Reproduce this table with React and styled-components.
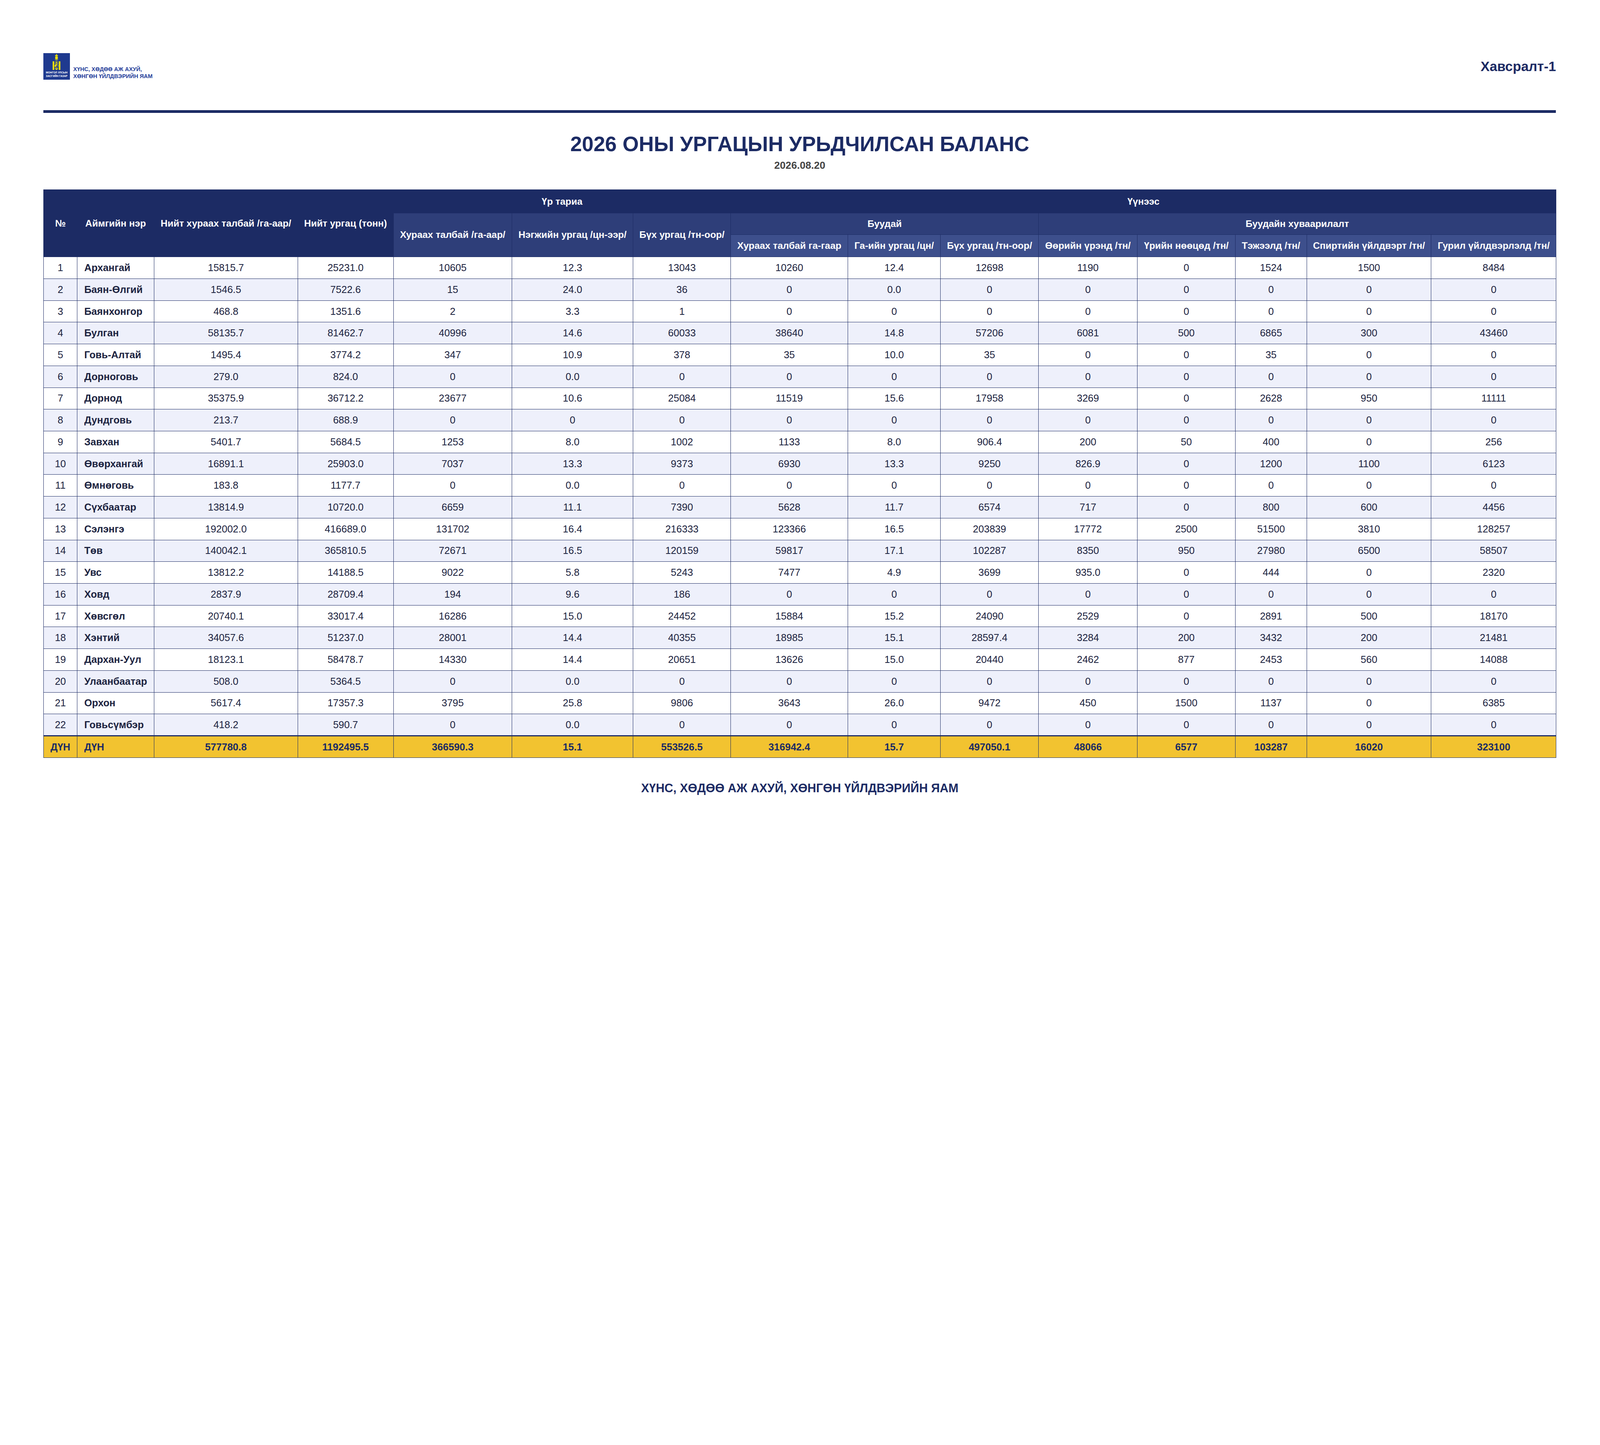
import React from 'react';
import styled, { createGlobalStyle } from 'styled-components';

// every size is measured in pixels of the 7056px-wide reference and scaled to the viewport
const px = n => `calc(${n} * var(--u))`;

const GlobalStyle = createGlobalStyle`
    :root {
        --u: calc(100vw / 7056);
    }
    html, body {
        margin: 0;
        overflow: hidden;
        background: #ffffff;
        font-family: "Liberation Sans", Arial, sans-serif;
    }
`;

const NAVY = '#1c2b64';

const Page = styled.div`
    width: 100vw;
    box-sizing: border-box;
    padding: ${px(235)} ${px(194)} ${px(150)} ${px(192)};
    background: #ffffff;
`;

const TopBar = styled.header`
    display: flex;
    justify-content: space-between;
    align-items: center;
`;

const Brand = styled.div`
    display: flex;
    align-items: flex-end;
    gap: ${px(15)};
`;

const Mark = styled.div`
    width: ${px(116)};
    height: ${px(117)};
    background: #1f3a8f;
    display: flex;
    flex-direction: column;
    align-items: center;
`;

const EmblemSvg = styled.svg`
    display: block;
    width: ${px(116)};
    height: ${px(79)};
`;

const MarkText = styled.div`
    color: #ffffff;
    font-size: ${px(11.5)};
    font-weight: 700;
    line-height: ${px(14.5)};
    text-align: center;
    white-space: nowrap;
`;

const BrandName = styled.div`
    color: #26409a;
    font-size: ${px(25)};
    font-weight: 700;
    line-height: ${px(30.5)};
    white-space: nowrap;
`;

const Annex = styled.div`
    color: ${NAVY};
    font-size: ${px(60)};
    font-weight: 700;
`;

const Rule = styled.div`
    height: ${px(12)};
    margin-top: ${px(134)};
    background: ${NAVY};
`;

const Title = styled.h1`
    margin: ${px(82)} 0 0;
    color: ${NAVY};
    font-size: ${px(92)};
    line-height: 1.2;
    font-weight: 700;
    text-align: center;
`;

const DateLine = styled.div`
    margin-top: ${px(13)};
    color: #444444;
    font-size: ${px(45)};
    line-height: 1.2;
    font-weight: 700;
    text-align: center;
`;

const Table = styled.table`
    margin-top: ${px(79)};
    width: 100%;
    table-layout: fixed;
    border-collapse: collapse;
`;

const Col = styled.col`
    width: ${p => px(p.$w)};
`;

const HeadRow = styled.tr`
    height: ${p => px(p.$h)};
`;

const tones = {
    dark: '#1c2b64',
    mid: '#2e3e79',
    light: '#3d4f8c',
};

const Th = styled.th`
    background: ${p => tones[p.$tone]};
    color: #ffffff;
    font-size: ${px(42)};
    font-weight: 700;
    padding: 0 ${px(4)};
    text-align: center;
    vertical-align: middle;
    white-space: nowrap;
    border: ${px(3)} solid ${NAVY};
`;

const Row = styled.tr`
    height: ${px(96)};
    background: ${p => (p.$alt ? '#eef0fb' : '#ffffff')};
`;

const TotalRow = styled.tr`
    height: ${px(97)};
    background: #f2c330;
`;

const Td = styled.td`
    border: ${px(3)} solid ${NAVY};
    padding: 0 ${px(10)};
    padding-left: ${p => (p.$left ? px(31) : px(10))};
    color: #1c2340;
    font-size: ${px(44)};
    font-weight: ${p => (p.$bold ? 700 : 400)};
    text-align: ${p => (p.$left ? 'left' : 'center')};
    vertical-align: middle;
    white-space: nowrap;
`;

const TotalTd = styled(Td)`
    border-top: ${px(6)} solid ${NAVY};
    color: ${NAVY};
    font-weight: 700;
`;

const Footer = styled.div`
    margin-top: ${px(102)};
    color: ${NAVY};
    font-size: ${px(53)};
    line-height: 1.2;
    font-weight: 700;
    text-align: center;
`;

const colWidths = [147, 340, 633, 422, 523, 534, 431, 516, 409, 432, 436, 432, 315, 549, 551];

const rows = [
    ['1', 'Архангай', '15815.7', '25231.0', '10605', '12.3', '13043', '10260', '12.4', '12698', '1190', '0', '1524', '1500', '8484'],
    ['2', 'Баян-Өлгий', '1546.5', '7522.6', '15', '24.0', '36', '0', '0.0', '0', '0', '0', '0', '0', '0'],
    ['3', 'Баянхонгор', '468.8', '1351.6', '2', '3.3', '1', '0', '0', '0', '0', '0', '0', '0', '0'],
    ['4', 'Булган', '58135.7', '81462.7', '40996', '14.6', '60033', '38640', '14.8', '57206', '6081', '500', '6865', '300', '43460'],
    ['5', 'Говь-Алтай', '1495.4', '3774.2', '347', '10.9', '378', '35', '10.0', '35', '0', '0', '35', '0', '0'],
    ['6', 'Дорноговь', '279.0', '824.0', '0', '0.0', '0', '0', '0', '0', '0', '0', '0', '0', '0'],
    ['7', 'Дорнод', '35375.9', '36712.2', '23677', '10.6', '25084', '11519', '15.6', '17958', '3269', '0', '2628', '950', '11111'],
    ['8', 'Дундговь', '213.7', '688.9', '0', '0', '0', '0', '0', '0', '0', '0', '0', '0', '0'],
    ['9', 'Завхан', '5401.7', '5684.5', '1253', '8.0', '1002', '1133', '8.0', '906.4', '200', '50', '400', '0', '256'],
    ['10', 'Өвөрхангай', '16891.1', '25903.0', '7037', '13.3', '9373', '6930', '13.3', '9250', '826.9', '0', '1200', '1100', '6123'],
    ['11', 'Өмнөговь', '183.8', '1177.7', '0', '0.0', '0', '0', '0', '0', '0', '0', '0', '0', '0'],
    ['12', 'Сүхбаатар', '13814.9', '10720.0', '6659', '11.1', '7390', '5628', '11.7', '6574', '717', '0', '800', '600', '4456'],
    ['13', 'Сэлэнгэ', '192002.0', '416689.0', '131702', '16.4', '216333', '123366', '16.5', '203839', '17772', '2500', '51500', '3810', '128257'],
    ['14', 'Төв', '140042.1', '365810.5', '72671', '16.5', '120159', '59817', '17.1', '102287', '8350', '950', '27980', '6500', '58507'],
    ['15', 'Увс', '13812.2', '14188.5', '9022', '5.8', '5243', '7477', '4.9', '3699', '935.0', '0', '444', '0', '2320'],
    ['16', 'Ховд', '2837.9', '28709.4', '194', '9.6', '186', '0', '0', '0', '0', '0', '0', '0', '0'],
    ['17', 'Хөвсгөл', '20740.1', '33017.4', '16286', '15.0', '24452', '15884', '15.2', '24090', '2529', '0', '2891', '500', '18170'],
    ['18', 'Хэнтий', '34057.6', '51237.0', '28001', '14.4', '40355', '18985', '15.1', '28597.4', '3284', '200', '3432', '200', '21481'],
    ['19', 'Дархан-Уул', '18123.1', '58478.7', '14330', '14.4', '20651', '13626', '15.0', '20440', '2462', '877', '2453', '560', '14088'],
    ['20', 'Улаанбаатар', '508.0', '5364.5', '0', '0.0', '0', '0', '0', '0', '0', '0', '0', '0', '0'],
    ['21', 'Орхон', '5617.4', '17357.3', '3795', '25.8', '9806', '3643', '26.0', '9472', '450', '1500', '1137', '0', '6385'],
    ['22', 'Говьсүмбэр', '418.2', '590.7', '0', '0.0', '0', '0', '0', '0', '0', '0', '0', '0', '0'],
];

const total = ['ДҮН', 'ДҮН', '577780.8', '1192495.5', '366590.3', '15.1', '553526.5', '316942.4', '15.7', '497050.1', '48066', '6577', '103287', '16020', '323100'];

const leafHeads = [
    'Хураах талбай га-гаар',
    'Га-ийн ургац /цн/',
    'Бүх ургац /тн-оор/',
    'Өөрийн үрэнд /тн/',
    'Үрийн нөөцөд /тн/',
    'Тэжээлд /тн/',
    'Спиртийн үйлдвэрт /тн/',
    'Гурил үйлдвэрлэлд /тн/',
];

// soyombo, drawn small inside the blue mark
const Emblem = () => (
    <EmblemSvg viewBox="0 0 116 79">
        <g fill="#f5e400">
            <path d="M52 14 Q51 9 53.5 7 Q53.5 10 55.5 11 Q55 6 58 3 Q61 6 60.5 11 Q62.5 10 62.5 7 Q65 9 64 14 Z" />
            <circle cx="58" cy="21" r="6.3" />
            <path d="M49 26.5 Q58 38 67 26.5 Q58 32 49 26.5 Z" />
            <rect x="41" y="36" width="7" height="38" />
            <rect x="68" y="36" width="7" height="38" />
            <polygon points="51,37.5 65,37.5 58,43" />
            <rect x="51" y="44" width="14" height="2.4" />
            <circle cx="58" cy="56" r="8.2" />
            <rect x="51" y="66" width="14" height="2.4" />
            <polygon points="51,69.5 65,69.5 58,75" />
        </g>
        <path d="M58 49 A7 7 0 0 1 58 63 A3.5 3.5 0 0 1 58 56 A3.5 3.5 0 0 0 58 49 Z" fill="#1f3a8f" />
        <circle cx="58" cy="59.5" r="1.2" fill="#f5e400" />
        <circle cx="58" cy="52.5" r="1.2" fill="#1f3a8f" />
    </EmblemSvg>
);

const App = () => {
    return (
        <>
            <GlobalStyle />
            <Page>
                <TopBar>
                    <Brand>
                        <Mark>
                            <Emblem />
                            <MarkText>МОНГОЛ УЛСЫН<br />ЗАСГИЙН ГАЗАР</MarkText>
                        </Mark>
                        <BrandName>ХҮНС, ХӨДӨӨ АЖ АХУЙ,<br />ХӨНГӨН ҮЙЛДВЭРИЙН ЯАМ</BrandName>
                    </Brand>
                    <Annex>Хавсралт-1</Annex>
                </TopBar>
                <Rule />

                <Title>2026 ОНЫ УРГАЦЫН УРЬДЧИЛСАН БАЛАНС</Title>
                <DateLine>2026.08.20</DateLine>

                <Table>
                    <colgroup>
                        {colWidths.map((w, i) => (
                            <Col key={i} $w={w} />
                        ))}
                    </colgroup>
                    <thead>
                        <HeadRow $h={102}>
                            <Th $tone="dark" rowSpan={3}>№</Th>
                            <Th $tone="dark" rowSpan={3}>Аймгийн нэр</Th>
                            <Th $tone="dark" rowSpan={3}>Нийт хураах талбай /га-аар/</Th>
                            <Th $tone="dark" rowSpan={3}>Нийт ургац (тонн)</Th>
                            <Th $tone="dark" colSpan={3}>Үр тариа</Th>
                            <Th $tone="dark" colSpan={8}>Үүнээс</Th>
                        </HeadRow>
                        <HeadRow $h={96}>
                            <Th $tone="mid" rowSpan={2}>Хураах талбай /га-аар/</Th>
                            <Th $tone="mid" rowSpan={2}>Нэгжийн ургац /цн-ээр/</Th>
                            <Th $tone="mid" rowSpan={2}>Бүх ургац /тн-оор/</Th>
                            <Th $tone="mid" colSpan={3}>Буудай</Th>
                            <Th $tone="mid" colSpan={5}>Буудайн хуваарилалт</Th>
                        </HeadRow>
                        <HeadRow $h={98}>
                            {leafHeads.map(h => (
                                <Th key={h} $tone="light">{h}</Th>
                            ))}
                        </HeadRow>
                    </thead>
                    <tbody>
                        {rows.map((r, i) => (
                            <Row key={r[0]} $alt={i % 2 === 1}>
                                {r.map((v, j) => (
                                    <Td key={j} $left={j === 1} $bold={j === 1}>{v}</Td>
                                ))}
                            </Row>
                        ))}
                        <TotalRow>
                            {total.map((v, j) => (
                                <TotalTd key={j} $left={j === 1}>{v}</TotalTd>
                            ))}
                        </TotalRow>
                    </tbody>
                </Table>

                <Footer>ХҮНС, ХӨДӨӨ АЖ АХУЙ, ХӨНГӨН ҮЙЛДВЭРИЙН ЯАМ</Footer>
            </Page>
        </>
    );
};

export default App;
